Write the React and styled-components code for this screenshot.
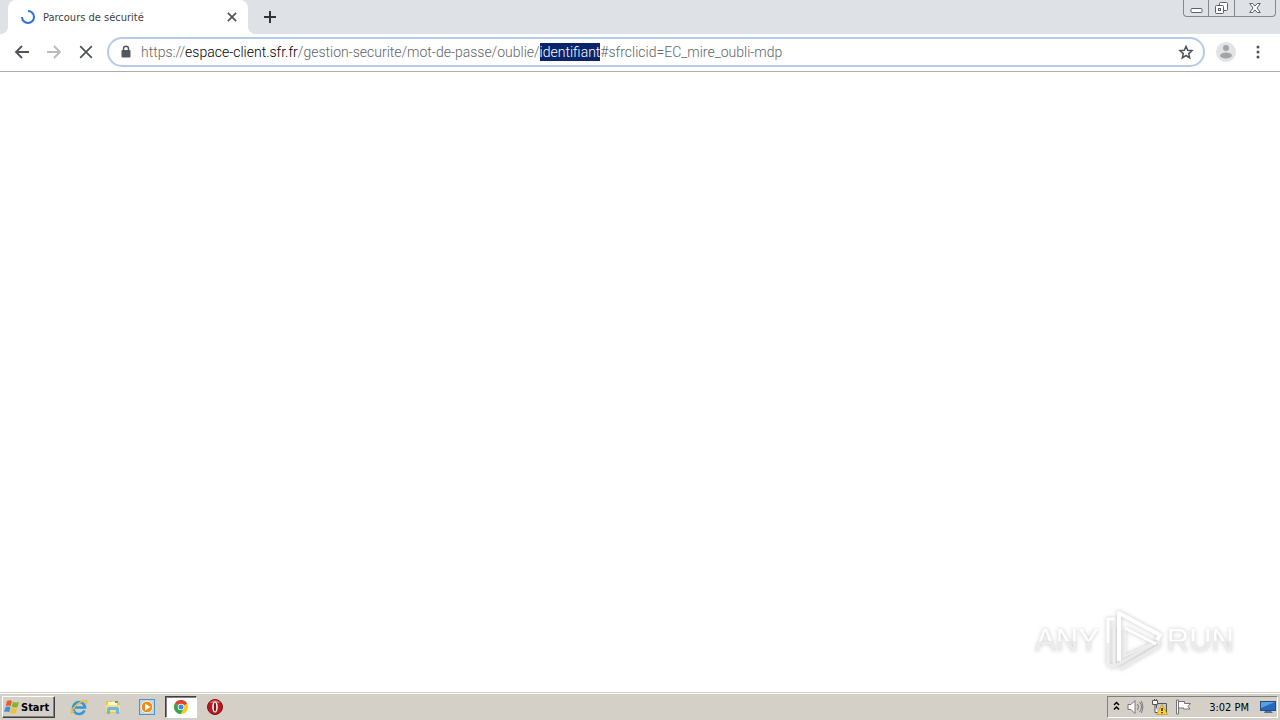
import React from "react";
import styled, { createGlobalStyle, css } from "styled-components";

const GlobalStyle = createGlobalStyle`
  * { box-sizing: border-box; }
  body {
    margin: 0;
    background: #fff;
    font-family: "DejaVu Sans Condensed", "DejaVu Sans", sans-serif;
    font-size: 11px;
    color: #000;
  }
  button, input { font: inherit; color: inherit; margin: 0; padding: 0; border: 0; background: none; }
  svg { display: block; flex: none; }
`;

const Desktop = styled.div`
  display: flex;
  flex-direction: column;
  min-height: 100vh;
`;

const TabStrip = styled.header`
  display: flex;
  align-items: flex-start;
  height: 34px;
  padding-left: 8px;
  background: #dee1e6;
`;

const Tab = styled.div`
  position: relative;
  display: flex;
  align-items: center;
  width: 240px;
  height: 34px;
  padding: 0 8px 0 12px;
  gap: 7px;
  background: #fff;
  border-radius: 8px 8px 0 0;
  &::before, &::after {
    content: "";
    position: absolute;
    bottom: 0;
    width: 8px;
    height: 8px;
  }
  &::before { right: 100%; background: radial-gradient(circle at 0 0, #dee1e6 8px, #fff 8px); }
  &::after { left: 100%; background: radial-gradient(circle at 100% 0, #dee1e6 8px, #fff 8px); }
`;

const TabTitle = styled.span`
  flex: 1;
  white-space: nowrap;
  color: #3c4043;
`;

const IconButton = styled.button`
  display: flex;
  align-items: center;
  justify-content: center;
  flex: none;
  width: ${(p) => p.$size || 32}px;
  height: ${(p) => p.$size || 32}px;
  color: ${(p) => p.$color || "#4f5357"};
`;

const NewTab = styled(IconButton)`
  margin: 3px 0 0 8px;
`;

const WindowControls = styled.div`
  display: flex;
  height: 17px;
  margin: 0 4px 0 auto;
  border: 1px solid #85898f;
  border-top: 0;
  border-radius: 0 0 4px 4px;
`;

const WindowButton = styled.button`
  display: flex;
  align-items: center;
  justify-content: center;
  width: ${(p) => p.$width}px;
  color: #5d6167;
  & + & { border-left: 1px solid #85898f; }
`;

const Toolbar = styled.nav`
  display: flex;
  align-items: center;
  height: 38px;
  padding: 0 6px 1px;
  border-bottom: 1px solid #acadb1;
  background: #fff;
`;

const AddressBar = styled.label`
  display: flex;
  align-items: center;
  flex: 1;
  height: 30px;
  margin: 0 5px;
  padding: 0 9px 0 11px;
  gap: 9px;
  border: 2px solid #b4cbea;
  border-radius: 15px;
`;

const addressType = css`
  font-family: Roboto, sans-serif;
  font-weight: 300;
  font-size: 14px;
  line-height: 18px;
  white-space: pre;
`;

const AddressField = styled.span`
  position: relative;
  flex: 1;
  min-width: 0;
  overflow: hidden;
  ${addressType}
  color: #606468;
`;

const AddressInput = styled.input`
  position: absolute;
  inset: 0;
  width: 100%;
  ${addressType}
  color: transparent;
  outline: 0;
`;

const Host = styled.span`
  color: #000;
`;

const Selected = styled.span`
  display: inline-block;
  background: #0a246a;
  color: #fff;
`;

const Page = styled.main`
  display: flex;
  flex: 1;
  align-items: flex-end;
  justify-content: flex-end;
  padding: 0 46px 19px 0;
`;

const Watermark = styled.div`
  display: flex;
  align-items: center;
  gap: 4px;
  filter: drop-shadow(0 0 2px #c4c4c4);
`;

const WatermarkText = styled.span`
  font-family: "Liberation Sans", sans-serif;
  font-size: 31px;
  line-height: 40px;
  color: transparent;
  background: linear-gradient(#fff 50%, #ececec 50%);
  background-clip: text;
`;

const Taskbar = styled.footer`
  display: flex;
  align-items: center;
  height: 28px;
  padding: 1px 2px 0;
  background: #d4d0c8;
  border-top: 1px solid #d4d0c8;
  box-shadow: inset 0 1px #fff;
`;

const StartButton = styled.button`
  display: flex;
  align-items: center;
  gap: 1px;
  width: 53px;
  height: 22px;
  padding: 0 1px;
  margin-right: 8px;
  border: 1px solid;
  border-color: #fff #404040 #404040 #fff;
  box-shadow: inset -1px -1px #808080;
  font-weight: 700;
`;

const Launcher = styled.button`
  display: flex;
  align-items: center;
  justify-content: center;
  width: 32px;
  height: 22px;
  margin-right: 2px;
  border: 1px solid transparent;
  ${(p) =>
    p.$active &&
    css`
      background: #fff;
      border-color: #404040 #fff #fff #404040;
      box-shadow: inset 1px 1px #808080;
    `}
`;

const Tray = styled.div`
  display: flex;
  align-items: center;
  gap: 7px;
  height: 22px;
  margin-left: auto;
  padding: 0 1px 0 5px;
  border: 1px solid;
  border-color: #808080 #fff #fff #808080;
`;

const TrayButton = styled.button`
  display: flex;
`;

const Clock = styled.time`
  margin: 0 4px 0 10px;
  white-space: nowrap;
`;

const Spinner = () => (
  <svg width="16" height="16" viewBox="0 0 16 16" fill="none" stroke="#2a72e0" strokeWidth="2">
    <path d="M8 2A6 6 0 1 1 2 8" />
  </svg>
);
const Cross = ({ size, width }) => (
  <svg width={size} height={size} viewBox="0 0 12 12" fill="none" stroke="currentColor" strokeWidth={width}>
    <path d="M1 1l10 10M11 1L1 11" />
  </svg>
);
const Arrow = ({ flip }) => (
  <svg width="16" height="16" viewBox="0 0 16 16" fill="none" stroke="currentColor" strokeWidth="1.8">
    <path d={flip ? "M1 8h13M8 2l6 6-6 6" : "M15 8H2M8 2L2 8l6 6"} />
  </svg>
);
const Lock = () => (
  <svg width="12" height="14" viewBox="0 0 12 14">
    <path d="M3.5 6V3.8a2.5 2.5 0 0 1 5 0V6" fill="none" stroke="#54585d" strokeWidth="1.5" />
    <rect x="1.5" y="5" width="9" height="7.5" rx="1" fill="#54585d" />
  </svg>
);
const Star = () => (
  <svg width="16" height="16" viewBox="0 0 16 16" fill="none" stroke="#4f5357" strokeWidth="1.5">
    <path d="M8 2.300l1.700 4 4.300.4-3.300 2.900 1 4.200L8 11.500l-3.700 2.300 1-4.200L2 6.700l4.300-.4z" />
  </svg>
);
const Avatar = () => (
  <svg width="20" height="20" viewBox="0 0 20 20">
    <circle cx="10" cy="10" r="10" fill="#e2e3e5" />
    <circle cx="10" cy="6" r="3" fill="#a2a4a6" />
    <ellipse cx="10" cy="13.500" rx="6" ry="3" fill="#a2a4a6" />
  </svg>
);
const Dots = () => (
  <svg width="4" height="14" viewBox="0 0 4 14" fill="currentColor">
    <circle cx="2" cy="2" r="1.500" /><circle cx="2" cy="7" r="1.500" /><circle cx="2" cy="12" r="1.500" />
  </svg>
);
const Minimize = () => (
  <svg width="13" height="14" viewBox="0 0 13 14" fill="#fff" stroke="currentColor">
    <rect x="1" y="7.500" width="11" height="4" rx="1" />
  </svg>
);
const Restore = () => (
  <svg width="13" height="14" viewBox="0 0 13 14" fill="#fff" stroke="currentColor">
    <rect x="4.500" y="1.500" width="8" height="8" rx="1" />
    <rect x="0.500" y="4.500" width="8" height="8" rx="1" />
    <rect x="3.500" y="7.500" width="2" height="2" />
  </svg>
);
const CloseWindow = () => (
  <svg width="12" height="12" viewBox="0 0 12 12" fill="#fff" stroke="currentColor">
    <path d="M.7 1.500h3L6 4l2.300-2.500h3L8 6l3.300 4.500h-3L6 8l-2.300 2.500h-3L4 6z" />
  </svg>
);
const PlayMark = () => (
  <svg width="60" height="64" viewBox="0 0 60 64" fill="none" strokeLinejoin="round">
    <path d="M12 10H5V34" stroke="#fff" strokeWidth="3" />
    <path d="M5 34V55l6 3V16" stroke="#efefef" strokeWidth="3" />
    <path d="M17 60L56 37V32L12 57" stroke="#ebebeb" strokeWidth="3" />
    <path d="M16 52V4L57 26l-3 5" stroke="#fff" strokeWidth="4" />
    <path d="M22 19l31 16" stroke="#fff" strokeWidth="3" />
    <path d="M22 21v26l26-12" stroke="#eee" strokeWidth="2" />
  </svg>
);
const WindowsLogo = () => (
  <svg width="16" height="16" viewBox="0 0 16 16">
    <path d="M3 2q3-1.500 5 .3L6.700 7.300q-2-1.400-5-.1z" fill="#ed5b27" />
    <path d="M9 2.800q3 1.500 6 .1l-1.400 5q-3 1.200-5.900-.1z" fill="#80b52c" />
    <path d="M1.500 8.200q3-1.200 5 .1L5.200 13.200Q3 11.800.1 13z" fill="#3d91d5" />
    <path d="M7.500 8.900q3 1.300 5.800.1l-1.400 5q-3 1.200-5.800-.2z" fill="#f6c02b" />
  </svg>
);
const Explorer = () => (
  <svg width="18" height="18" viewBox="0 0 18 18" fill="none">
    <path d="M14.500 12.500A6 6 0 1 1 15 9.500H5" stroke="#3199d8" strokeWidth="2.600" />
    <path d="M4 13C-1 19 1 11 7 6.500S19 .5 16 6" stroke="#eebc3c" strokeWidth="1.500" />
  </svg>
);
const Folder = () => (
  <svg width="16" height="16" viewBox="0 0 16 16">
    <path d="M1 2h6l1 2h7v10H1z" fill="#e8c658" />
    <path d="M3 3h9v5H3z" fill="#fff6c9" />
    <path d="M1 6h14v7H1z" fill="#f7df83" />
    <path d="M2 15v-5q0-2 2-2h8q2 0 2 2v5h-3v-4H5v4z" fill="#70b7df" />
    <path d="M10 2h3v2h-3z" fill="#59a869" />
  </svg>
);
const MediaPlayer = () => (
  <svg width="16" height="16" viewBox="0 0 16 16">
    <rect x=".5" y=".5" width="15" height="15" fill="#b9d9ef" stroke="#4e91c5" />
    <circle cx="8" cy="8" r="5.800" fill="#f18b18" stroke="#fff1d2" />
    <path d="M6 4.500v7L11.500 8z" fill="#fff" />
  </svg>
);
const Chrome = () => (
  <svg width="14" height="14" viewBox="0 0 14 14">
    <circle cx="7" cy="7" r="7" fill="#fbc918" />
    <path d="M7 7L.9 3.500a7 7 0 0 1 12.200 0z" fill="#e04132" />
    <path d="M7 7l-6.100-3.500A7 7 0 0 0 6.500 14L10 8.500z" fill="#35a353" />
    <circle cx="7" cy="7" r="3.300" fill="#fff" />
    <circle cx="7" cy="7" r="2.500" fill="#4285e8" />
  </svg>
);
const Opera = () => (
  <svg width="16" height="16" viewBox="0 0 16 16">
    <circle cx="8" cy="8" r="7.500" fill="#b81920" stroke="#821116" />
    <path d="M3 4a6 6 0 0 1 10 0" fill="#e2666b" />
    <ellipse cx="8" cy="8" rx="2.800" ry="5.600" fill="#fff" />
    <ellipse cx="8" cy="8" rx="1.200" ry="4.600" fill="#8b1217" />
  </svg>
);
const Chevrons = () => (
  <svg width="7" height="12" viewBox="0 0 7 12" fill="none" stroke="#000" strokeWidth="1.500">
    <path d="M1 4l2.500-2.500L6 4M1 8.500L3.500 6 6 8.500" />
  </svg>
);
const Speaker = () => (
  <svg width="17" height="16" viewBox="0 0 17 16" fill="none" stroke="#77777a">
    <path d="M1 5.500h3l4-4v13l-4-4H1z" fill="#fff" />
    <path d="M10.500 5q2 3 0 6M12.500 3q4 5 0 10M14.500 2q3 6 0 12" />
  </svg>
);
const Network = () => (
  <svg width="17" height="16" viewBox="0 0 17 16">
    <path d="M5.500 4.500h10v9h-10z" fill="#c8c8c5" stroke="#55575a" />
    <path d="M1.500 1.500h5v4h-5zM4 5.500v8h3M3.500 0v2M5.500 0v2" fill="#fff" stroke="#55575a" />
    <path d="M11 5.500l5.500 10h-11z" fill="#ffd42a" stroke="#b98d12" strokeWidth=".6" />
    <path d="M11 9v3M11 13v1.300" stroke="#000" strokeWidth="1.300" />
  </svg>
);
const Flag = () => (
  <svg width="17" height="16" viewBox="0 0 17 16" fill="#fff" stroke="#737375">
    <path d="M1.500 1h2v14h-2z" />
    <path d="M3.500 2.500h6v2h6l-2.500 3 2 2.500H8.500V9h-5z" />
  </svg>
);
const Monitor = () => (
  <svg width="16" height="14" viewBox="0 0 16 14">
    <rect x=".5" y="1.500" width="15" height="9" fill="#2668bd" stroke="#294a7b" />
    <path d="M1 2h14L1 8z" fill="#59a0e4" />
    <path d="M5 11h6l2 2H4z" fill="#526f94" />
  </svg>
);

const url = {
  scheme: "https://",
  host: "espace-client.sfr.fr",
  path: "/gestion-securite/mot-de-passe/oublie/",
  selected: "identifiant",
  rest: "#sfrclicid=EC_mire_oubli-mdp",
};

const launchers = [
  { name: "Internet Explorer", Icon: Explorer },
  { name: "Windows Explorer", Icon: Folder },
  { name: "Media Player", Icon: MediaPlayer },
  { name: "Chrome", Icon: Chrome, active: true },
  { name: "Opera", Icon: Opera },
];

const trayItems = [
  { name: "Show hidden icons", Icon: Chevrons },
  { name: "Volume", Icon: Speaker },
  { name: "Network", Icon: Network },
  { name: "Action Center", Icon: Flag },
];

export default function App() {
  return (
    <Desktop>
      <GlobalStyle />
      <TabStrip>
        <Tab>
          <Spinner />
          <TabTitle>Parcours de sécurité</TabTitle>
          <IconButton $size={16} aria-label="Close tab"><Cross size={10} width={2} /></IconButton>
        </Tab>
        <NewTab $size={28} $color="#303338" aria-label="New tab">
          <svg width="12" height="12" viewBox="0 0 12 12" stroke="currentColor" strokeWidth="2"><path d="M6 0v12M0 6h12" /></svg>
        </NewTab>
        <WindowControls>
          <WindowButton $width={24} aria-label="Minimize"><Minimize /></WindowButton>
          <WindowButton $width={26} aria-label="Restore"><Restore /></WindowButton>
          <WindowButton $width={41} aria-label="Close window"><CloseWindow /></WindowButton>
        </WindowControls>
      </TabStrip>
      <Toolbar>
        <IconButton aria-label="Back"><Arrow /></IconButton>
        <IconButton $color="#b9bbbd" aria-label="Forward"><Arrow flip /></IconButton>
        <IconButton aria-label="Stop"><Cross size={14} width={1.5} /></IconButton>
        <AddressBar>
          <Lock />
          <AddressField>
            <span aria-hidden="true">
              {url.scheme}<Host>{url.host}</Host>{url.path}<Selected>{url.selected}</Selected>{url.rest}
            </span>
            <AddressInput aria-label="Address" spellCheck={false} defaultValue={Object.values(url).join("")} />
          </AddressField>
          <IconButton $size={16} aria-label="Bookmark"><Star /></IconButton>
        </AddressBar>
        <IconButton aria-label="Profile"><Avatar /></IconButton>
        <IconButton aria-label="Menu"><Dots /></IconButton>
      </Toolbar>
      <Page>
        <Watermark>
          <WatermarkText>ANY</WatermarkText>
          <PlayMark />
          <WatermarkText>RUN</WatermarkText>
        </Watermark>
      </Page>
      <Taskbar>
        <StartButton><WindowsLogo />Start</StartButton>
        {launchers.map(({ name, Icon, active }) => (
          <Launcher key={name} $active={active} aria-label={name}><Icon /></Launcher>
        ))}
        <Tray>
          {trayItems.map(({ name, Icon }) => (
            <TrayButton key={name} aria-label={name}><Icon /></TrayButton>
          ))}
          <Clock>3:02 PM</Clock>
          <TrayButton aria-label="Show desktop"><Monitor /></TrayButton>
        </Tray>
      </Taskbar>
    </Desktop>
  );
}
